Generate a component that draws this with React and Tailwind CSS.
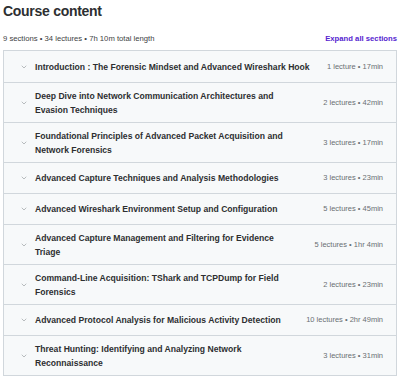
import { ChevronDown } from 'lucide-react'

// line breaks follow the reference layout
const sections = [
  { title: 'Introduction : The Forensic Mindset and Advanced Wireshark Hook', meta: '1 lecture • 17min' },
  { title: 'Deep Dive into Network Communication Architectures and\nEvasion Techniques', meta: '2 lectures • 42min' },
  { title: 'Foundational Principles of Advanced Packet Acquisition and\nNetwork Forensics', meta: '3 lectures • 17min' },
  { title: 'Advanced Capture Techniques and Analysis Methodologies', meta: '3 lectures • 23min' },
  { title: 'Advanced Wireshark Environment Setup and Configuration', meta: '5 lectures • 45min' },
  { title: 'Advanced Capture Management and Filtering for Evidence\nTriage', meta: '5 lectures • 1hr 4min' },
  { title: 'Command-Line Acquisition: TShark and TCPDump for Field\nForensics', meta: '2 lectures • 23min' },
  { title: 'Advanced Protocol Analysis for Malicious Activity Detection', meta: '10 lectures • 2hr 49min' },
  { title: 'Threat Hunting: Identifying and Analyzing Network\nReconnaissance', meta: '3 lectures • 31min' },
]

const App = () => {
  return (
    <div className="w-[400px] h-[379px] overflow-hidden bg-white px-[3px] font-['Liberation_Sans',sans-serif] text-[#2d2f31]">
      <h2 className="pt-[1px] text-[14px] leading-[20px] font-bold tracking-[-0.02em]">Course content</h2>
      <div className="mt-[13px] flex items-end justify-between">
        <p className="text-[7.7px] leading-[10px] text-[#3e4143]">9 sections • 34 lectures • 7h 10m total length</p>
        <button className="text-[7.7px] leading-[10px] font-bold text-[#5624d0]">Expand all sections</button>
      </div>
      <div className="mt-[6px] border border-[#d1d7dc]">
        {sections.map((s, i) => (
          <div
            key={i}
            className="flex min-h-[31px] items-center gap-[12px] border-t border-[#d1d7dc] bg-[#f7f9fa] py-[5.5px] pl-[16px] pr-[13px] first:border-t-0"
          >
            <ChevronDown className="-mr-[5px] h-[8px] w-[8px] shrink-0 text-[#8a8f93]" strokeWidth={1.75} />
            <div className="flex-1 whitespace-pre-line text-[8.6px] leading-[14px] font-bold">{s.title}</div>
            <div className="shrink-0 text-[7.5px] leading-[14px] text-[#6a6f73]">{s.meta}</div>
          </div>
        ))}
      </div>
    </div>
  )
}

export default App
